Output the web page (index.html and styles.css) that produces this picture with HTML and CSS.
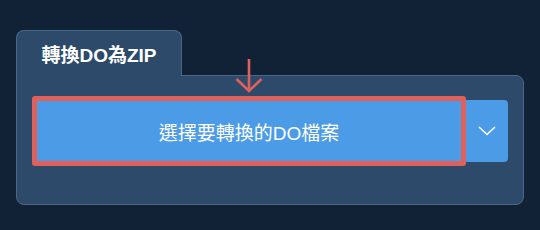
FILE: index.html
```html
<!DOCTYPE html>
<html lang="zh-Hant">
<head>
    <meta charset="UTF-8">
    <title>轉換DO為ZIP</title>
    <link rel="stylesheet" href="styles.css">
</head>
<body>
    <div class="tabs">
        <div class="tab">轉換DO為ZIP</div>
    </div>
    <div class="panel">
        <div class="split-button">
            <div class="main-button">選擇要轉換的DO檔案</div>
            <div class="menu-button">
                <svg width="18" height="10" viewBox="0 0 18 10">
                    <path d="M1 1 L9 8.5 L17 1" fill="none" stroke="#fff" stroke-width="1.6"/>
                </svg>
            </div>
            <svg class="hint-arrow" width="30" height="36" viewBox="0 0 30 36">
                <path d="M15 1 V33 M2.5 21 L15 33 L27.5 21" fill="none" stroke="#e0605c" stroke-width="2.6"/>
            </svg>
        </div>
    </div>
</body>
</html>
```

FILE: styles.css
```css
body {
    margin: 0;
    padding: 30px 16px 0 16px;
    background: #112237;
    font-family: "Liberation Sans", "Noto Sans CJK TC", sans-serif;
    width: 508px;
}
.tabs {
    display: flex;
}
.tab {
    width: 166px;
    height: 46px;
    box-sizing: border-box;
    display: flex;
    justify-content: center;
    align-items: center;
    background: #2d4a6b;
    border: 1px solid #4a6688;
    border-bottom: none;
    border-radius: 8px 8px 0 0;
    color: #ffffff;
    font-weight: bold;
    font-size: 19px;
    position: relative;
    z-index: 1;
    margin-bottom: -1px;
}
.panel {
    background: #2d4a6b;
    border: 1px solid #4a6688;
    border-radius: 0 8px 8px 8px;
    padding: 20px 15px 38px 15px;
}
.split-button {
    display: flex;
    align-items: center;
    position: relative;
}
.main-button {
    width: 434px;
    height: 70px;
    box-sizing: border-box;
    border: 5px solid #e0605c;
    border-radius: 3px;
    background: #4b9be6;
    color: #ffffff;
    font-size: 19px;
    display: flex;
    justify-content: center;
    align-items: center;
}
.menu-button {
    width: 42px;
    height: 62px;
    background: #4b9be6;
    border-radius: 0 4px 4px 0;
    display: flex;
    justify-content: center;
    align-items: center;
}
.hint-arrow {
    position: absolute;
    left: 202px;
    top: -38px;
}
```
